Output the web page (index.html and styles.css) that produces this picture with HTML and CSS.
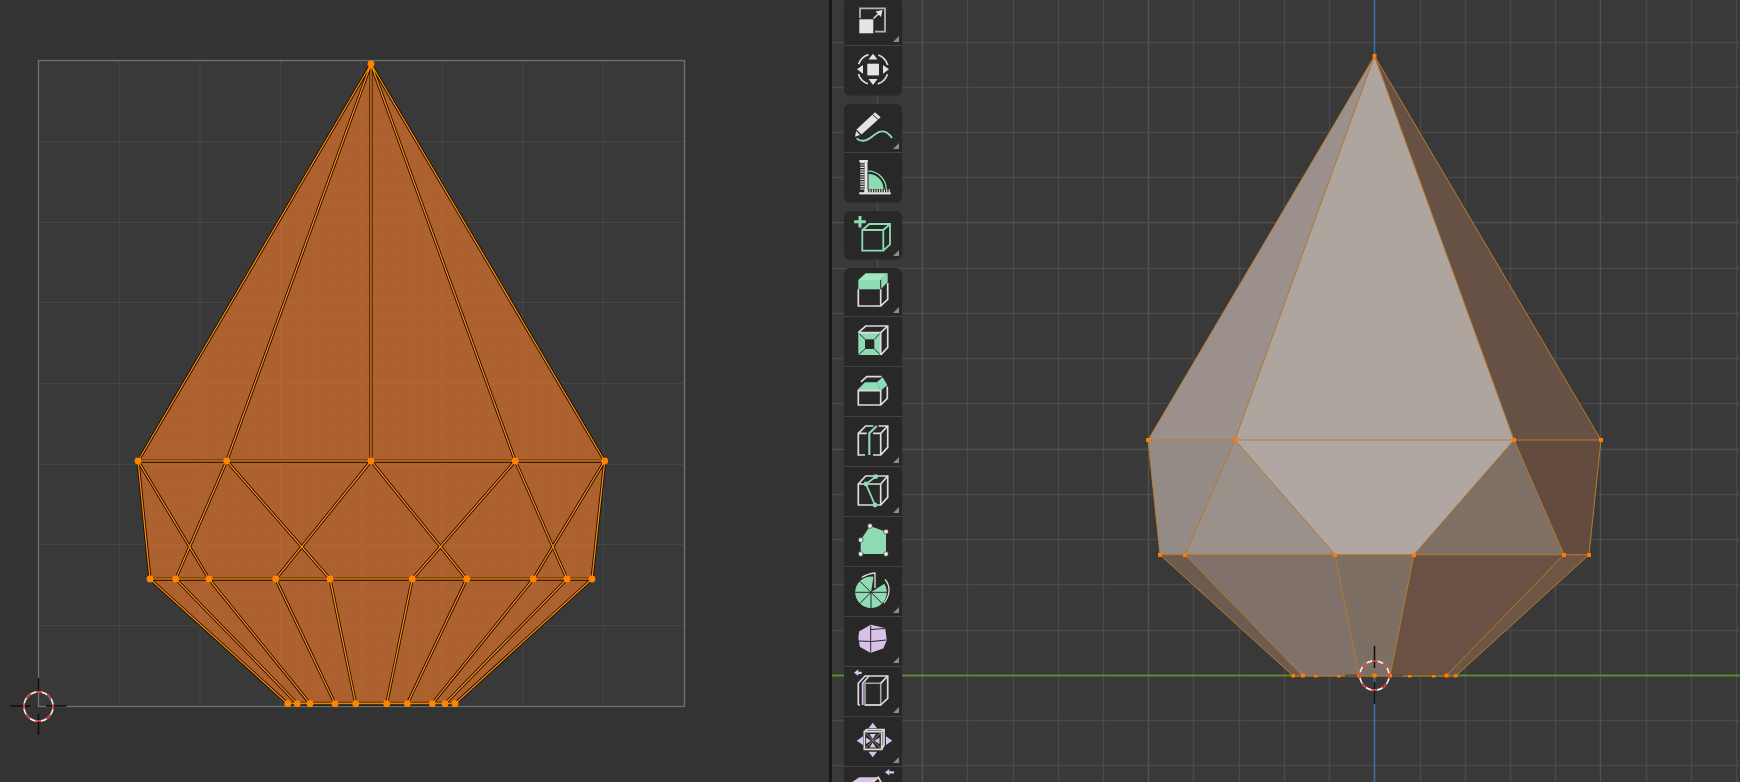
FILE: index.html
```html
<!DOCTYPE html>
<html lang="en">
<head>
<meta charset="utf-8">
<title>UV Editor and 3D Viewport</title>
<link rel="stylesheet" href="styles.css">
</head>
<body>
<main class="app">
  <section class="uv-editor">
    <svg class="canvas" width="829" height="782" viewBox="0 0 829 782">
      <defs>
        <pattern id="uv-fine" x="38.5" y="60.5" width="16.125" height="16.125" patternUnits="userSpaceOnUse">
          <path class="uv-fine-line" d="M0 0V16.125M0 0H16.125"/>
        </pattern>
        <path id="uv-edges" d="M371 64L138 461M371 64L226.7 461M371 64V461M371 64L515.3 461M371 64L604.7 461
          M138 461L150 579M604.7 461L592 579
          M138 461L209 579M226.7 461L175.7 579M226.7 461L330 579M371 461L275.7 579M371 461L466.7 579M515.3 461L412.3 579M515.3 461L567 579M604.7 461L533.3 579
          M150 579L287.7 703.7M175.7 579L297.3 703.7M209 579L310 703.7M275.7 579L335 703.7M330 579L355.7 703.7M412.3 579L386.7 703.7M466.7 579L407.3 703.7M533.3 579L432.3 703.7M567 579L445 703.7M592 579L455 703.7"/>
        <path id="uv-rows" d="M138 461H604.7M150 579H592M287.7 703.7H455"/>
      </defs>
      <rect class="uv-square" x="38.5" y="60.5" width="646" height="646"/>
      <rect x="38.5" y="60.5" width="646" height="646" fill="url(#uv-fine)"/>
      <path class="uv-grid" d="M119.5 61V706M200 61V706M280.5 61V706M361.5 61V706M442 61V706M522.5 61V706M603.5 61V706M39 141.5H684M39 222.5H684M39 302.5H684M39 383.5H684M39 464.5H684M39 544.5H684M39 625.5H684"/>
      <rect class="uv-border" x="38.5" y="60.5" width="646" height="646"/>
      <polygon class="uv-face" points="371,64 138,461 150,579 287.7,703.7 455,703.7 592,579 604.7,461"/>
      <use href="#uv-edges" class="uv-edge-back"/>
      <use href="#uv-edges" class="uv-edge-front"/>
      <use href="#uv-rows" class="uv-row-band"/>
      <use href="#uv-rows" class="uv-row-shadow"/>
      <use href="#uv-rows" class="uv-row-core"/>
      <g class="uv-verts">
        <circle cx="371" cy="64" r="3.4"/>
        <circle cx="138" cy="461" r="3.4"/><circle cx="226.7" cy="461" r="3.4"/><circle cx="371" cy="461" r="3.4"/><circle cx="515.3" cy="461" r="3.4"/><circle cx="604.7" cy="461" r="3.4"/>
        <circle cx="150" cy="579" r="3.4"/><circle cx="175.7" cy="579" r="3.4"/><circle cx="209" cy="579" r="3.4"/><circle cx="275.7" cy="579" r="3.4"/><circle cx="330" cy="579" r="3.4"/><circle cx="412.3" cy="579" r="3.4"/><circle cx="466.7" cy="579" r="3.4"/><circle cx="533.3" cy="579" r="3.4"/><circle cx="567" cy="579" r="3.4"/><circle cx="592" cy="579" r="3.4"/>
        <circle cx="287.7" cy="703.7" r="3.4"/><circle cx="297.3" cy="703.7" r="3.4"/><circle cx="310" cy="703.7" r="3.4"/><circle cx="335" cy="703.7" r="3.4"/><circle cx="355.7" cy="703.7" r="3.4"/><circle cx="386.7" cy="703.7" r="3.4"/><circle cx="407.3" cy="703.7" r="3.4"/><circle cx="432.3" cy="703.7" r="3.4"/><circle cx="445" cy="703.7" r="3.4"/><circle cx="455" cy="703.7" r="3.4"/>
      </g>
      <path class="cursor-tick" d="M38.5 678V691M38.5 714V735M10 706H30.5M46 706H66.5"/>
      <circle class="cursor-white" cx="38.5" cy="706.5" r="14.6"/>
      <circle class="cursor-red" cx="38.5" cy="706.5" r="14.6"/>
    </svg>
  </section>

  <div class="divider"></div>

  <section class="viewport">
    <svg class="canvas" width="908" height="782" viewBox="832 0 908 782">
      <path class="vp-grid" d="M877.5 0V782M967.5 0V782M1013.5 0V782M1058.5 0V782M1103.5 0V782M1193.5 0V782M1239.5 0V782M1284.5 0V782M1329.5 0V782M1420.5 0V782M1465.5 0V782M1510.5 0V782M1555.5 0V782M1646.5 0V782M1691.5 0V782M1736.5 0V782
        M832 42.5H1740M832 87.5H1740M832 132.5H1740M832 177.5H1740M832 268.5H1740M832 313.5H1740M832 358.5H1740M832 403.5H1740M832 494.5H1740M832 539.5H1740M832 584.5H1740M832 630.5H1740M832 720.5H1740M832 765.5H1740"/>
      <path class="vp-grid-major" d="M922.5 0V782M1148.5 0V782M1600.5 0V782M832 222.5H1740M832 449.5H1740"/>
      <path class="axis-green" d="M832 675.5H1740"/>
      <path class="axis-blue" d="M1374.5 0V782"/>
      <polygon class="face" fill="#9b908b" points="1374.5,56 1148,440 1235,440"/>
      <polygon class="face" fill="#aea59f" points="1374.5,56 1235,440 1514,440"/>
      <polygon class="face" fill="#675145" points="1374.5,56 1514,440 1601,440"/>
      <polygon class="face" fill="#958b86" points="1148,440 1235,440 1185,554.7 1160,554.7"/>
      <polygon class="face" fill="#9a928a" points="1235,440 1185,554.7 1335,554.7"/>
      <polygon class="face" fill="#b0a7a2" points="1235,440 1514,440 1414,554.7 1335,554.7"/>
      <polygon class="face" fill="#7f7065" points="1514,440 1414,554.7 1564,554.7"/>
      <polygon class="face" fill="#634c3e" points="1514,440 1601,440 1589,554.7 1564,554.7"/>
      <polygon class="face" fill="#6e5b50" points="1160,554.7 1185,554.7 1302.7,676 1293.3,676"/>
      <polygon class="face" fill="#80726a" points="1185,554.7 1335,554.7 1359,676 1302.7,676"/>
      <polygon class="face" fill="#7e6f64" points="1335,554.7 1414,554.7 1390,676 1359,676"/>
      <polygon class="face" fill="#695143" points="1414,554.7 1564,554.7 1446,676 1390,676"/>
      <polygon class="face" fill="#6e5645" points="1564,554.7 1589,554.7 1455.7,676 1446,676"/>
      <path class="gem-edge" d="M1374.5 56L1148 440L1160 554.7L1293.3 676H1455.7L1589 554.7L1601 440ZM1374.5 56L1235 440M1374.5 56L1514 440M1148 440H1601M1160 554.7H1589M1235 440L1185 554.7M1235 440L1335 554.7M1514 440L1414 554.7M1514 440L1564 554.7M1185 554.7L1302.7 676M1335 554.7L1359 676M1414 554.7L1390 676M1564 554.7L1446 676"/>
      <path class="cursor-tick" d="M1374.5 646V668M1374.5 682V704"/>
      <path class="cursor-tick-faint" d="M1345 675.5H1357M1391 675.5H1403"/>
      <g class="gem-verts">
        <rect x="1372.5" y="54" width="4" height="4"/>
        <rect x="1146" y="438" width="4" height="4"/><rect x="1233" y="438" width="4" height="4"/><rect x="1512" y="438" width="4" height="4"/><rect x="1599" y="438" width="4" height="4"/>
        <rect x="1158" y="553" width="4" height="4"/><rect x="1183" y="553" width="4" height="4"/><rect x="1333" y="553" width="4" height="4"/><rect x="1412" y="553" width="4" height="4"/><rect x="1562" y="553" width="4" height="4"/><rect x="1587" y="553" width="4" height="4"/>
        <rect x="1291.5" y="674" width="3.5" height="3.5"/><rect x="1301" y="673.5" width="4" height="4"/><rect x="1314" y="675" width="3.5" height="2.5"/><rect x="1337" y="675" width="3.5" height="2.5"/><rect x="1357.5" y="674" width="3" height="3.5"/><rect x="1372.5" y="673.5" width="4" height="4"/><rect x="1389" y="674" width="3" height="3.5"/><rect x="1408" y="675" width="3.5" height="2.5"/><rect x="1432" y="675" width="3.5" height="2.5"/><rect x="1444.5" y="673.5" width="4" height="4"/><rect x="1454" y="674" width="3.5" height="3.5"/>
      </g>
      <circle class="cursor-white" cx="1374.5" cy="675.5" r="14.6"/>
      <circle class="cursor-red" cx="1374.5" cy="675.5" r="14.6"/>
    </svg>

    <nav class="toolbar">
      <div class="tool-group">
        <div class="tool has-menu"><svg class="icon" viewBox="0 0 58 48">
          <path class="soft" d="M16 21V11.3H41V34.7H31"/>
          <rect class="white" x="15.3" y="22.3" width="14" height="14"/>
          <path class="line-white" d="M29.5 21.5L36 15.5"/>
          <polygon class="white" points="38.5,13 31.5,14.5 37,20"/>
        </svg></div>
        <div class="tool"><svg class="icon" viewBox="0 0 58 48">
          <circle class="dash-ring" cx="29" cy="22.3" r="15.3"/>
          <rect class="white" x="23.3" y="16.7" width="11.7" height="11.7"/>
          <polygon class="white" points="29,6.7 24.5,12.5 33.5,12.5"/>
          <polygon class="white" points="29,37.9 24.5,32 33.5,32"/>
          <polygon class="white" points="13,22.3 19,18 19,26.7"/>
          <polygon class="white" points="45,22.3 39,18 39,26.7"/>
        </svg></div>
      </div>
      <div class="tool-group">
        <div class="tool has-menu"><svg class="icon" viewBox="0 0 58 48">
          <polygon class="white" points="31,8.3 36.7,13.3 17.5,30.5 12.5,25.5"/>
          <polygon class="white" points="12.2,27 16,31 11,32.7"/>
          <path class="cut" d="M28.5 10.5L34.5 15.8"/>
          <path class="line-green" d="M12.7 34.3C17 38.5 23 37 29.5 31.5S42 25 48 34"/>
        </svg></div>
        <div class="tool"><svg class="icon" viewBox="0 0 58 48">
          <path class="green" d="M24.5 35V20A15 15 0 0 1 39.5 35Z"/>
          <path class="line-green thin" d="M24.3 17.2A18 18 0 0 1 42.2 35"/>
          <rect class="white" x="15.3" y="6" width="8.4" height="2"/>
          <rect class="white" x="20.5" y="6" width="3" height="34"/>
          <path class="ticks-v" d="M18.2 8V36"/>
          <rect class="white" x="15.3" y="38.2" width="31.4" height="2.2"/>
          <rect class="white" x="20.5" y="35.3" width="2" height="3"/>
          <path class="ticks-h" d="M23 36.7H46.7"/>
        </svg></div>
      </div>
      <div class="tool-group">
        <div class="tool has-menu"><svg class="icon" viewBox="0 0 58 48">
          <path class="line-green plus" d="M16 5V16.5M10.2 10.7H21.8"/>
          <path class="line-green" d="M18.3 19H39.3V39.7H18.3ZM18.3 19L25.3 13H46V33.3L39.3 39.7M39.3 19L46 13"/>
        </svg></div>
      </div>
      <div class="tool-group">
        <div class="tool has-menu"><svg class="icon" viewBox="0 0 58 48">
          <polygon class="green-light" points="14.3,12 21.7,5.3 43.7,5.3 36.7,12"/>
          <rect class="green" x="14.3" y="12" width="22.4" height="9.3"/>
          <polygon class="green" points="36.7,12 43.7,5.3 43.7,14 36.7,21.3"/>
          <path class="cut" d="M36.7 12V21.3"/>
          <path class="line-white" d="M14.3 21.3V38H36.7V21.3M36.7 38L43.7 31.3V15"/>
        </svg></div>
        <div class="tool"><svg class="icon" viewBox="0 0 58 48">
          <rect class="green" x="14.3" y="14.7" width="22.4" height="22.3"/>
          <rect class="hole" x="21" y="21.3" width="9.3" height="9.7"/>
          <path class="cut" d="M14.3 14.7L21 21.3M36.7 14.7L30.3 21.3M14.3 37L21 31M36.7 37L30.3 31"/>
          <path class="line-white" d="M14.3 14.7L21.7 8H43.7V29.3L36.7 37M14.3 14.7H36.7L43.7 8M36.7 14.7V37"/>
        </svg></div>
        <div class="tool"><svg class="icon" viewBox="0 0 58 48">
          <polygon class="green" points="14.3,22.7 14.3,21 21,14.3 32.7,14.3 36.7,22.7"/>
          <polygon class="green" points="32.7,14.3 38.7,9.3 43.3,17 36.7,22.7"/>
          <path class="line-white" d="M14.3 22.7V37H36.7V22.7ZM17 13.8L22.7 8.7H37.5M36.7 37L43.3 30.3V18.5"/>
        </svg></div>
        <div class="tool has-menu"><svg class="icon" viewBox="0 0 58 48">
          <path class="line-white" d="M22.7 15.3H14.3V37H21M29 15.3H36.7V37H29M14.3 15.3L21.7 8H29.3M34.5 8H43.7V29.3L36.7 37M36.7 15.3L43.7 8"/>
          <path class="line-green bold" d="M25.3 37V15.3L32.7 8"/>
        </svg></div>
        <div class="tool has-menu"><svg class="icon" viewBox="0 0 58 48">
          <path class="line-white" d="M14.3 16H36.7V37H14.3ZM14.3 16L21.7 8H43.7V29.3L36.7 37M36.7 16L43.7 8"/>
          <path class="line-green" d="M31.7 8.7L22 16L31 37"/>
          <circle class="green" cx="31.7" cy="8.7" r="2.4"/><circle class="green" cx="22" cy="16" r="2.4"/><circle class="green" cx="31" cy="37" r="2.4"/>
        </svg></div>
        <div class="tool"><svg class="icon" viewBox="0 0 58 48">
          <polygon class="green" points="16.7,22 26,8 42,13.7 42,36 16.7,36"/>
          <g class="dots"><circle cx="16.7" cy="22" r="2.4"/><circle cx="26" cy="8" r="2.4"/><circle cx="42" cy="13.7" r="2.4"/><circle cx="42" cy="36" r="2.4"/><circle cx="16.7" cy="36" r="2.4"/></g>
        </svg></div>
        <div class="tool has-menu"><svg class="icon" viewBox="0 0 58 48">
          <path class="green" d="M27 24.3L29.5 8.7A15.8 15.8 0 1 0 40.3 15.8Z"/>
          <path class="cut" d="M27 24.3V40.1M27 24.3H11.2M27 24.3L15.8 13.1M27 24.3L15.8 35.5M27 24.3L38.2 35.5M27 24.3H42.8"/>
          <path class="line-white thin" d="M17.7 9.5Q24 5.5 31 5V20"/>
          <path class="line-white thin" d="M41 11.5C47 18 46 28 40 35"/>
        </svg></div>
        <div class="tool has-menu"><svg class="icon" viewBox="0 0 58 48">
          <polygon class="purple rounded" points="15.8,14 26.7,7.6 40.5,10.8 42,22 38.8,29.8 26.7,34 16.5,28.2 15.2,20"/>
          <path class="cut" d="M26.7 7.5V34.5M14.8 23Q27 24.5 42.5 22M26.7 11.5L41 10.5"/>
        </svg></div>
        <div class="tool has-menu"><svg class="icon" viewBox="0 0 58 48">
          <polygon class="purple" points="10,4.7 14.3,1.3 14.3,3.7 17.7,3.7 17.7,5.9 14.3,5.9 14.3,8"/>
          <path class="line-grey" d="M21 15.3H36.7V37H21Z"/>
          <path class="line-white" d="M14.3 37V15.3L21 8H43.7V30.3L36.7 37H21M36.7 15.3L43.7 8M14.3 37H16"/>
          <path class="line-purple" d="M18.7 37V15.3L25 8"/>
        </svg></div>
        <div class="tool has-menu"><svg class="icon" viewBox="0 0 58 48">
          <path class="line-white" d="M20.3 13.7H37.7V31.3H20.3ZM20.3 13.7L22.7 11.5H40V27L37.7 31.3M37.7 13.7L40 11.5"/>
          <path class="cut-light" d="M20.3 13.7L37.7 31.3M37.7 13.7L20.3 31.3"/>
          <polygon class="purple" points="28.7,4.7 24.5,10.3 33,10.3"/>
          <polygon class="purple" points="28.7,39.3 24.5,33.7 33,33.7"/>
          <polygon class="purple" points="12.7,22.7 19,18.3 19,27"/>
          <polygon class="purple" points="48.3,22.7 42,18.3 42,27"/>
          <polygon class="purple" points="28.7,21 25.5,16 32,16"/>
          <polygon class="purple" points="28.7,24.5 25.5,29.5 32,29.5"/>
          <polygon class="purple" points="27,22.7 22,19.5 22,26"/>
          <polygon class="purple" points="30.5,22.7 35.5,19.5 35.5,26"/>
        </svg></div>
        <div class="tool has-menu"><svg class="icon" viewBox="0 0 58 48">
          <polygon class="purple" points="41,4.3 45.3,1 45.3,3.2 50,3.2 50,5.4 45.3,5.4 45.3,7.6"/>
          <polygon class="purple" points="5,16 15.3,9.3 34.3,9.3 27,16"/>
          <path class="line-white" d="M27 16L34.3 9.3L38 16"/>
        </svg></div>
      </div>
    </nav>
  </section>
</main>
</body>
</html>
```
FILE: styles.css
```css
* { box-sizing: border-box; }
html, body { margin: 0; height: 100%; overflow: hidden; background: #333333; }

.app { display: flex; width: 1740px; height: 782px; overflow: hidden; }
.uv-editor { flex: 0 0 829px; height: 782px; background: #333333; }
.divider { flex: 0 0 3px; background: #181818; }
.viewport { position: relative; flex: 1 1 auto; height: 782px; overflow: hidden; background: #393939; }
.canvas { display: block; }

/* UV editor */
.uv-square { fill: #393939; }
.uv-fine-line { fill: none; stroke: #3c3c3c; stroke-width: 1; }
.uv-grid { fill: none; stroke: #454545; stroke-width: 1; }
.uv-border { fill: none; stroke: #707070; stroke-width: 1.3; }
.uv-face { fill: #fa7d2a; fill-opacity: 0.6; }
.uv-edge-back { fill: none; stroke: #120b04; stroke-width: 3; }
.uv-edge-front { fill: none; stroke: #ff8a00; stroke-width: 1.3; }
.uv-row-band { fill: none; stroke: #7d4806; stroke-width: 1.8; transform: translateY(-1.2px); }
.uv-row-shadow { fill: none; stroke: #120b04; stroke-width: 1.2; transform: translateY(1.1px); }
.uv-row-core { fill: none; stroke: #e97f08; stroke-width: 1.2; }
.uv-verts circle { fill: #ff8500; }

/* 3D viewport */
.vp-grid { fill: none; stroke: #494949; stroke-width: 1.5; }
.vp-grid-major { fill: none; stroke: #505050; stroke-width: 1.5; }
.axis-green { fill: none; stroke: #5f8a30; stroke-width: 2; }
.axis-blue { fill: none; stroke: #3e70a8; stroke-width: 1.6; }
.gem-edge { fill: none; stroke: #ba7a2e; stroke-width: 1; stroke-linejoin: round; }
.gem-verts rect { fill: #ff7a00; }

.cursor-tick { fill: none; stroke: #0e0e0e; stroke-width: 1.5; }
.cursor-tick-faint { fill: none; stroke: #5c4a38; stroke-width: 2; }
.cursor-white { fill: none; stroke: #f2f2f2; stroke-width: 1.6; }
.cursor-red { fill: none; stroke: #e42222; stroke-width: 1.6; stroke-dasharray: 5.73 5.73; stroke-dashoffset: 2.8; }

/* Toolbar */
.toolbar { position: absolute; left: 12px; top: -3px; display: flex; flex-direction: column; gap: 9px; width: 58px; }
.tool-group { display: flex; flex-direction: column; background: #282828; border-radius: 6px; overflow: hidden; box-shadow: 0 1px 1px rgba(0, 0, 0, 0.2); }
.tool { position: relative; height: 50px; padding-top: 1px; border-top: 1px solid #434343; }
.tool:first-child { height: 48px; padding-top: 0; border-top: 0; }
.has-menu::after { content: ""; position: absolute; right: 3px; bottom: 3px; width: 6px; height: 6px; background: #8c8c8c; clip-path: polygon(100% 0, 100% 100%, 0 100%); }
.icon { display: block; width: 58px; height: 48px; }

.white { fill: #e4e4e4; }
.green { fill: #8fdcb4; }
.green-light { fill: #a2e6c4; }
.purple { fill: #d9c2e8; }
.rounded { stroke: #d9c2e8; stroke-width: 1.6; stroke-linejoin: round; }
.hole { fill: #282828; }
.soft { fill: none; stroke: #b4b4b4; stroke-width: 1.8; }
.line-white { fill: none; stroke: #dcdcdc; stroke-width: 1.7; }
.line-grey { fill: none; stroke: #a8a8a8; stroke-width: 1.6; }
.line-green { fill: none; stroke: #8fdcb4; stroke-width: 1.8; }
.line-purple { fill: none; stroke: #d9c2e8; stroke-width: 1.8; }
.thin { stroke-width: 1.3; }
.bold { stroke-width: 2.1; }
.plus { stroke-width: 3; }
.cut { fill: none; stroke: #282828; stroke-width: 1; }
.cut-light { fill: none; stroke: #8a8a8a; stroke-width: 1; }
.dash-ring { fill: none; stroke: #dcdcdc; stroke-width: 1.7; stroke-dasharray: 14 10.03; stroke-dashoffset: -5; }
.ticks-v { fill: none; stroke: #dcdcdc; stroke-width: 4; stroke-dasharray: 1.2 1.2; }
.ticks-h { fill: none; stroke: #dcdcdc; stroke-width: 3; stroke-dasharray: 1.2 1.2; }
.dots circle { fill: #e8e8e8; stroke: #282828; stroke-width: 0.6; }
```
